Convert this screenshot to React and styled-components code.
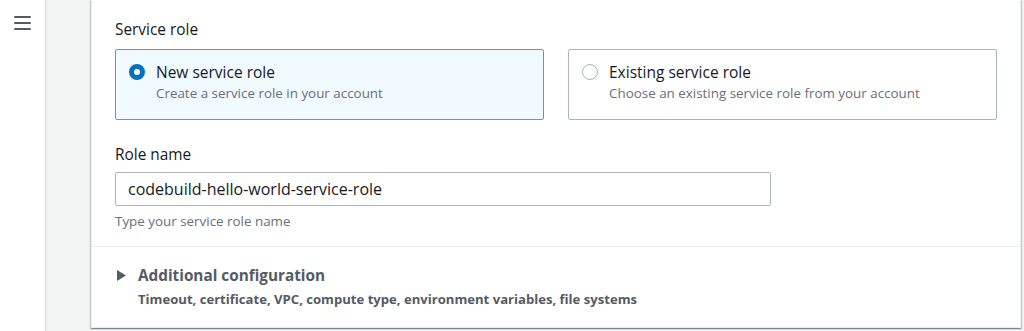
import React, { useState } from "react";
import styled, { createGlobalStyle } from "styled-components";

const GlobalStyle = createGlobalStyle`
  html, body {
    margin: 0;
    padding: 0;
    background: #f2f3f3;
  }
  body {
    font-family: "Open Sans", "Noto Sans", sans-serif;
    color: #16191f;
    -webkit-font-smoothing: antialiased;
  }
`;

const Page = styled.div`
  display: flex;
  height: 331px;
  overflow: hidden;
`;

const SideNav = styled.nav`
  width: 45px;
  flex: none;
  background: #ffffff;
  display: flex;
  justify-content: center;
  padding-top: 16px;
  box-sizing: border-box;
`;

const MenuButton = styled.button`
  width: 17px;
  height: 14px;
  padding: 0;
  margin-left: -1px;
  border: none;
  background: transparent;
  display: flex;
  flex-direction: column;
  justify-content: space-between;
  cursor: pointer;

  span {
    display: block;
    height: 2px;
    background: #545b64;
    border-radius: 1px;
  }
`;

const Main = styled.main`
  flex: 1;
  background: #f2f3f3;
  border-left: 1px solid #d5dbdb;
  padding: 0 3px 3px 45px;
  display: flex;
  flex-direction: column;
`;

const Card = styled.section`
  flex: 1;
  background: #ffffff;
  border: 1px solid #eaeded;
  border-top: none;
  box-shadow: 0 1px 1px 0 rgba(0, 28, 36, 0.3), 1px 1px 1px 0 rgba(0, 28, 36, 0.15),
    -1px 1px 1px 0 rgba(0, 28, 36, 0.15);
  display: flex;
  flex-direction: column;
`;

const CardBody = styled.div`
  padding: 19px 23px 15px;
  border-bottom: 1px solid #eaeded;
`;

const Label = styled.div`
  font-size: 15.4px;
  line-height: 22px;
  color: #16191f;
  margin-top: ${(p) => p.$top || 0}px;
`;

const Tiles = styled.div`
  display: grid;
  grid-template-columns: 1fr 1fr;
  gap: 24px;
  margin-top: 8px;
`;

const Tile = styled.label`
  display: flex;
  align-items: flex-start;
  gap: 11px;
  height: 71px;
  box-sizing: border-box;
  padding: 11px 14px 0 13px;
  border: 1px solid ${(p) => (p.$selected ? "#44a6cf" : "#aab7b8")};
  border-radius: 2px;
  background: ${(p) => (p.$selected ? "#f1faff" : "#ffffff")};
  cursor: pointer;
`;

const Radio = styled.span`
  flex: none;
  width: 16px;
  height: 16px;
  margin-top: 3px;
  box-sizing: border-box;
  border-radius: 50%;
  background: #ffffff;
  border: ${(p) => (p.$checked ? "5px solid #0073bb" : "1.5px solid #aab7b8")};
`;

const TileText = styled.div`
  display: flex;
  flex-direction: column;
`;

const TileTitle = styled.span`
  font-size: 15.5px;
  line-height: 22px;
  color: #16191f;
`;

const Hint = styled.span`
  font-size: 13.4px;
  line-height: 20px;
  color: #687078;
`;

const Input = styled.input`
  display: block;
  width: 656px;
  height: 34px;
  box-sizing: border-box;
  margin-top: 6px;
  padding: 0 12px;
  border: 1px solid #aab7b8;
  border-radius: 2px;
  font-family: inherit;
  font-size: 16px;
  color: #16191f;
  outline: none;
`;

const FieldHint = styled(Hint)`
  display: block;
  margin-top: 5px;
`;

const Expander = styled.div`
  padding: 17px 23px 17px 25px;
  display: flex;
  gap: 12px;
  align-items: flex-start;
`;

const Caret = styled.svg`
  flex: none;
  margin-top: 6px;
`;

const ExpanderTitle = styled.div`
  font-size: 15.3px;
  line-height: 22px;
  font-weight: 700;
  color: #545b64;
`;

const ExpanderSub = styled.div`
  font-size: 13.1px;
  line-height: 20px;
  font-weight: 700;
  color: #545b64;
  margin-top: 3px;
`;

const options = [
  {
    id: "new",
    title: "New service role",
    desc: "Create a service role in your account",
  },
  {
    id: "existing",
    title: "Existing service role",
    desc: "Choose an existing service role from your account",
  },
];

export default function App() {
  const [role, setRole] = useState("new");
  const [name, setName] = useState("codebuild-hello-world-service-role");

  return (
    <>
      <GlobalStyle />
      <Page>
        <SideNav>
          <MenuButton aria-label="Open menu">
            <span />
            <span />
            <span />
          </MenuButton>
        </SideNav>
        <Main>
          <Card>
            <CardBody>
              <Label>Service role</Label>
              <Tiles>
                {options.map((o) => (
                  <Tile
                    key={o.id}
                    $selected={role === o.id}
                    onClick={() => setRole(o.id)}
                  >
                    <Radio $checked={role === o.id} />
                    <TileText>
                      <TileTitle>{o.title}</TileTitle>
                      <Hint>{o.desc}</Hint>
                    </TileText>
                  </Tile>
                ))}
              </Tiles>
              <Label $top={24}>Role name</Label>
              <Input value={name} onChange={(e) => setName(e.target.value)} />
              <FieldHint>Type your service role name</FieldHint>
            </CardBody>
            <Expander>
              <Caret width="9" height="11" viewBox="0 0 9 11">
                <path d="M0 0 L9 5.5 L0 11 Z" fill="#545b64" />
              </Caret>
              <div>
                <ExpanderTitle>Additional configuration</ExpanderTitle>
                <ExpanderSub>
                  Timeout, certificate, VPC, compute type, environment variables, file systems
                </ExpanderSub>
              </div>
            </Expander>
          </Card>
        </Main>
      </Page>
    </>
  );
}
